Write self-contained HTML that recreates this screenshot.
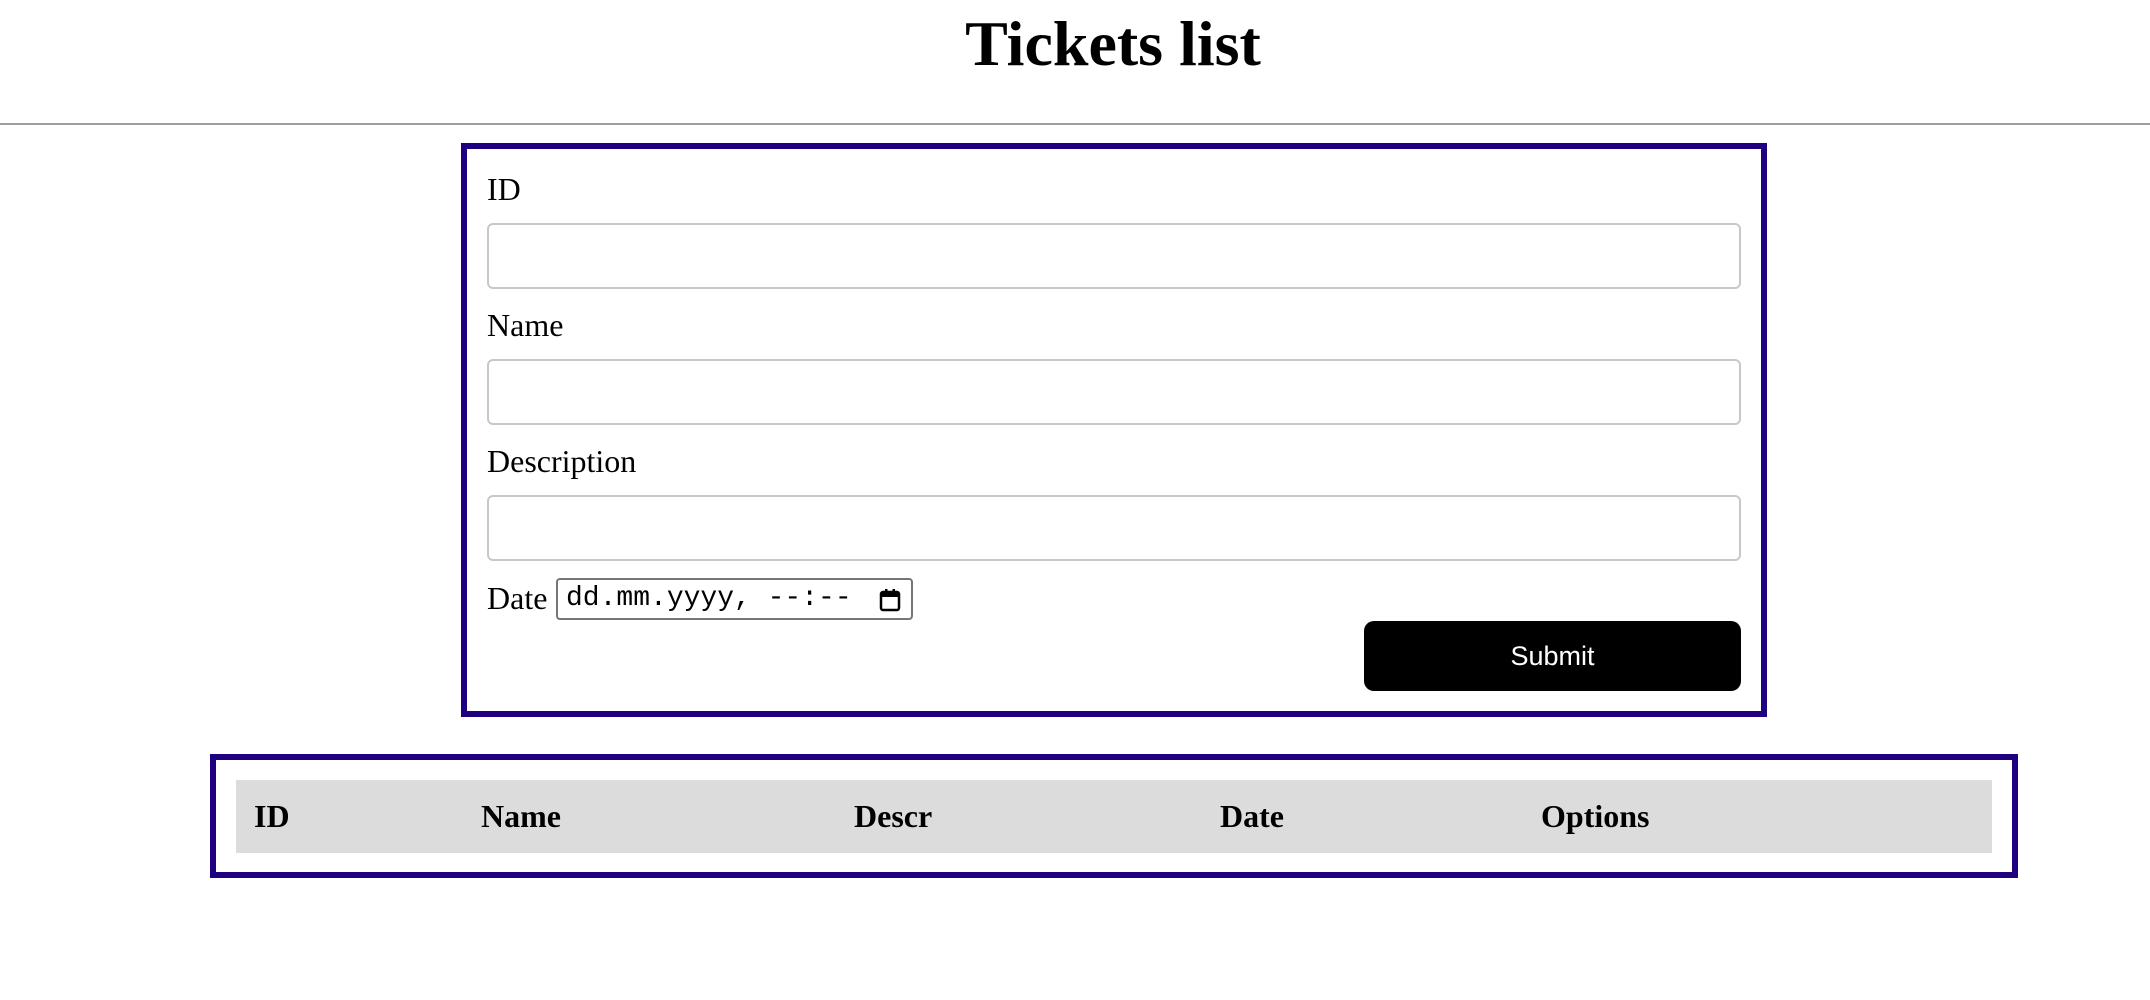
<!DOCTYPE html>
<html><head><style>
body{margin:0;width:2150px;height:1000px;background:#fff;position:relative;font-family:"Liberation Serif",serif;overflow:hidden}
.a{position:absolute}
h1{position:absolute;margin:0;left:0;width:2226px;text-align:center;top:6px;font-size:64px;font-weight:bold;line-height:76px}
.hr{left:0;width:2150px;top:123px;height:2px;background:#9e9e9e}
.box{border:6px solid #1e0080;box-sizing:border-box}
.lbl{font-size:32px;line-height:36px}
.inp{border:2px solid #c8c8c8;border-radius:6px;box-sizing:border-box;left:487px;width:1254px;height:66px}
.th{font-size:32px;font-weight:bold;top:798px;line-height:36px}
</style></head><body>
<h1>Tickets list</h1>
<div class="a hr"></div>
<div class="a box" style="left:461px;top:143px;width:1306px;height:574px"></div>
<div class="a lbl" style="left:487px;top:171px">ID</div>
<div class="a inp" style="top:223px"></div>
<div class="a lbl" style="left:487px;top:307px">Name</div>
<div class="a inp" style="top:359px"></div>
<div class="a lbl" style="left:487px;top:443px">Description</div>
<div class="a inp" style="top:495px"></div>
<div class="a lbl" style="left:487px;top:580px">Date</div>
<div class="a" style="left:556px;top:578px;width:357px;height:42px;border:2px solid #767676;border-radius:4px;box-sizing:border-box;font-family:'Liberation Mono',monospace;font-size:28px;line-height:38px;padding-left:8px">dd.mm.yyyy, --:--
<svg style="position:absolute;right:10px;top:8px" width="22" height="24" viewBox="0 0 22 24"><rect x="2" y="4" width="18" height="18" rx="2" fill="none" stroke="#000" stroke-width="2.5"/><rect x="2" y="4" width="18" height="5" fill="#000"/><rect x="6" y="1" width="2.5" height="5" fill="#000"/><rect x="13.5" y="1" width="2.5" height="5" fill="#000"/></svg></div>
<div class="a" style="left:1364px;top:621px;width:377px;height:70px;background:#000;border-radius:10px;color:#fff;font-family:'Liberation Sans',sans-serif;font-size:27px;text-align:center;line-height:70px">Submit</div>
<div class="a box" style="left:210px;top:754px;width:1808px;height:124px"></div>
<div class="a" style="left:236px;top:780px;width:1756px;height:73px;background:#dcdcdc"></div>
<div class="a th" style="left:254px">ID</div>
<div class="a th" style="left:481px">Name</div>
<div class="a th" style="left:854px">Descr</div>
<div class="a th" style="left:1220px">Date</div>
<div class="a th" style="left:1541px">Options</div>
</body></html>
